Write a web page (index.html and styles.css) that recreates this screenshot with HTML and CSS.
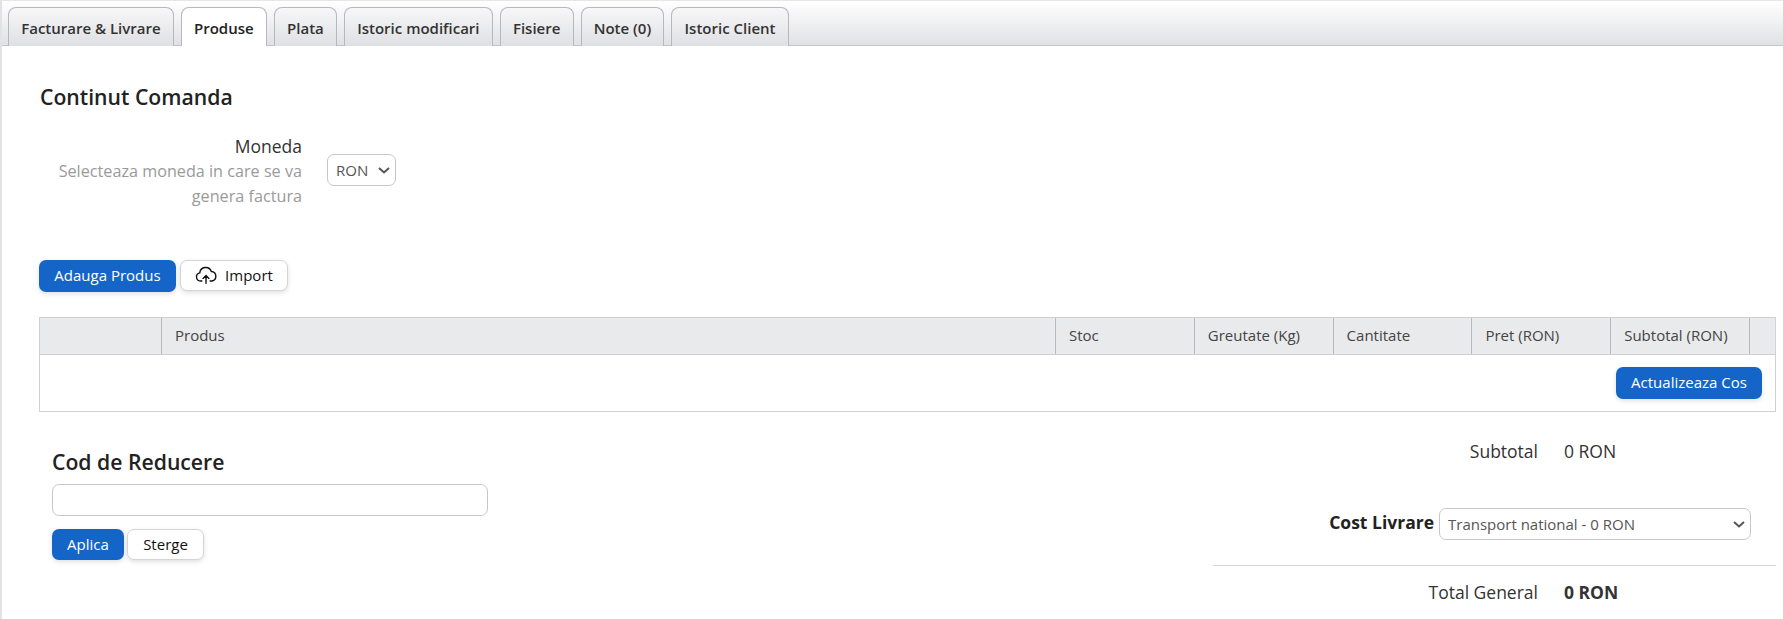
FILE: index.html
```html
<!DOCTYPE html>
<html lang="ro">
<head>
<meta charset="utf-8">
<title>Continut Comanda</title>
<link rel="stylesheet" href="styles.css">
</head>
<body>
<div class="page">
  <nav class="tabs">
    <a class="tab">Facturare &amp; Livrare</a>
    <a class="tab active">Produse</a>
    <a class="tab">Plata</a>
    <a class="tab">Istoric modificari</a>
    <a class="tab">Fisiere</a>
    <a class="tab">Note (0)</a>
    <a class="tab">Istoric Client</a>
  </nav>
  <main class="content">
    <h2 class="title">Continut Comanda</h2>
    <div class="currency">
      <div class="currency-label">
        <div class="label-main">Moneda</div>
        <div class="label-hint">Selecteaza moneda in care se va genera factura</div>
      </div>
      <span class="select-wrap select-wrap-small">
        <select class="select select-small"><option>RON</option></select>
        <svg class="chevron" viewBox="0 0 12 7" width="12" height="7" fill="none" stroke="#555" stroke-width="2"><path d="M1 1l5 4.5L11 1"/></svg>
      </span>
    </div>
    <div class="actions">
      <button class="btn btn-primary btn-add">Adauga Produs</button>
      <button class="btn btn-light btn-import">
        <svg class="cloud" viewBox="0 0 24 24" width="22" height="22" fill="none" stroke="#111" stroke-width="1.5" stroke-linecap="round" stroke-linejoin="round"><path d="M7.5 18.5H6a4.5 4.5 0 0 1-.8-8.9A6.5 6.5 0 0 1 17.8 8.2a5.2 5.2 0 0 1 .7 10.3H16.5"/><path d="M12 21v-8.5M8.8 15.7 12 12.5l3.2 3.2"/></svg>
        <span>Import</span>
      </button>
    </div>
    <div class="cart">
      <div class="cart-head">
        <div class="col col-img"></div>
        <div class="col col-prod">Produs</div>
        <div class="col col-n">Stoc</div>
        <div class="col col-n">Greutate (Kg)</div>
        <div class="col col-n">Cantitate</div>
        <div class="col col-n">Pret (RON)</div>
        <div class="col col-n">Subtotal (RON)</div>
        <div class="col col-end"></div>
      </div>
      <div class="cart-foot">
        <button class="btn btn-primary btn-update">Actualizeaza Cos</button>
      </div>
    </div>
    <div class="bottom">
      <section class="coupon">
        <h3 class="coupon-title">Cod de Reducere</h3>
        <input class="coupon-input" type="text">
        <div class="coupon-actions">
          <button class="btn btn-primary btn-apply">Aplica</button>
          <button class="btn btn-light btn-clear">Sterge</button>
        </div>
      </section>
      <section class="totals">
        <div class="row row-sub"><span class="row-label">Subtotal</span><span class="row-val">0 RON</span></div>
        <div class="row-ship">
          <strong class="ship-label">Cost Livrare</strong>
          <span class="select-wrap">
            <select class="select select-ship"><option>Transport national - 0 RON</option></select>
            <svg class="chevron" viewBox="0 0 12 7" width="12" height="7" fill="none" stroke="#555" stroke-width="2"><path d="M1 1l5 4.5L11 1"/></svg>
          </span>
        </div>
        <div class="row row-total"><span class="row-label">Total General</span><strong class="row-val">0 RON</strong></div>
      </section>
    </div>
  </main>
</div>
</body>
</html>
```

FILE: styles.css
```css
* { box-sizing: border-box; }
html, body { margin: 0; height: 100%; }
body { font-family: "Open Sans", sans-serif; color: #222; background: #fff; overflow: hidden; }
.page { min-height: 619px; border-left: 2px solid #e2e2e2; border-top: 1px solid #e6e6e6; }

.tabs { display: flex; gap: 7px; height: 45px; padding: 6px 0 0 6px; border-bottom: 1px solid #c4c4c8; background: linear-gradient(#fff, #e0e1e5); }
.tab { display: block; height: 39px; padding: 0 12.2px; font-size: 15px; font-weight: 600; line-height: 41px; color: #333; border: 1px solid #b8b8bc; border-bottom: 0; border-radius: 8px 8px 0 0; background: linear-gradient(#f7f7f8, #dfe0e4); }
.tab.active { color: #222; background: #fff; }

.content { padding: 0 0 0 37px; }
.title { margin: 0; padding: 37px 0 0 1px; font-size: 21.2px; line-height: 27px; font-weight: 560; color: #222; }
.currency { display: flex; align-items: flex-start; margin-top: 24px; }
.currency-label { width: 263px; text-align: right; }
.label-main { font-size: 17.5px; line-height: 25px; color: #333; }
.label-hint { font-size: 16.2px; line-height: 25px; color: #9a9a9a; }
.select-wrap { position: relative; display: block; }
.select-wrap-small { margin: 20px 0 0 25px; }
.chevron { position: absolute; right: 6px; top: 50%; margin-top: -3px; pointer-events: none; }
.select { display: block; appearance: none; font-family: inherit; color: #555; background: #fff; border: 1px solid #c8c8c8; border-radius: 7px; font-size: 15px; }
.select-small { width: 69px; height: 32px; padding: 0 2px 0 8px; }

.actions { display: flex; align-items: flex-start; gap: 4px; margin-top: 51px; }
.btn { font-family: inherit; font-size: 15px; border-radius: 7px; cursor: pointer; box-shadow: 0 2px 5px rgba(0,0,0,.12); padding: 0 0 2px; }
.btn-primary { color: #fff; background: #1565c8; border: 0; font-weight: 500; }
.btn-light { color: #111; background: #fff; border: 1px solid #d4d4d4; }
.btn-add { width: 137px; height: 32px; }
.btn-import { display: flex; align-items: center; justify-content: center; gap: 8px; width: 108px; height: 31px; }

.cart { width: 1737px; margin-top: 25px; border: 1px solid #d2d2d6; }
.cart-head { display: flex; height: 37px; background: #e9eaec; border-bottom: 1px solid #d2d2d6; }
.col { height: 36px; padding-left: 13px; font-size: 15px; line-height: 35px; color: #444; border-right: 1px solid #b9b9bd; }
.col-img { width: 122px; }
.col-prod { width: 894px; }
.col-n { width: 138.8px; }
.col-end { flex: 1; border-right: 0; }
.cart-foot { display: flex; justify-content: flex-end; height: 56px; padding: 12px 13px 0 0; }
.btn-update { width: 146px; height: 32px; }

.bottom { display: flex; justify-content: space-between; width: 1737px; }
.coupon { width: 436px; margin-left: 13px; padding-top: 36px; }
.coupon-title { margin: 0; font-size: 21.2px; line-height: 27px; font-weight: 560; color: #222; }
.coupon-input { display: block; width: 436px; height: 32px; margin-top: 9px; border: 1px solid #c8c8c8; border-radius: 7px; background: #fff; }
.coupon-actions { display: flex; gap: 3px; margin-top: 13px; }
.btn-apply { width: 72px; height: 31px; }
.btn-clear { width: 77px; height: 31px; }

.totals { width: 563px; }
.row { display: flex; gap: 26px; font-size: 17.5px; color: #333; }
.row-label { width: 325px; text-align: right; }
.row-sub { padding-top: 26px; height: 96px; line-height: 26px; }
.row-ship { display: flex; align-items: center; justify-content: flex-end; gap: 5px; padding-right: 25px; height: 32px; }
.ship-label { font-size: 17.5px; font-weight: 700; color: #222; line-height: 24px; margin-bottom: 5px; }
.select-ship { width: 312px; height: 32px; padding-left: 8px; }
.row-total { margin-top: 25px; border-top: 1px solid #d8d8d8; padding-top: 13px; line-height: 26px; }
```
